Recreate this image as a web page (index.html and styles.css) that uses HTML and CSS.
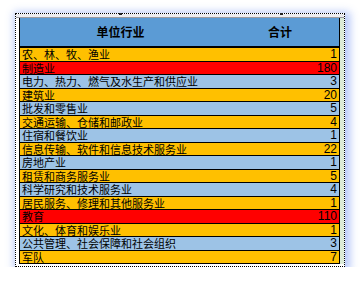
FILE: index.html
```html
<!DOCTYPE html>
<html lang="zh">
<head>
<meta charset="utf-8">
<link rel="stylesheet" href="styles.css">
</head>
<body>
<div class="frame">
  <span class="handle h1"></span>
  <span class="handle h2"></span>
  <div class="strip"></div>
  <div class="body">
    <div class="gap"></div>
    <div class="table">
      <div class="row head"><div class="name">单位行业</div><div class="num">合计</div></div>
      <div class="row o"><div class="name">农、林、牧、渔业</div><div class="num">1</div></div>
      <div class="row r"><div class="name">制造业</div><div class="num">180</div></div>
      <div class="row b"><div class="name">电力、热力、燃气及水生产和供应业</div><div class="num">3</div></div>
      <div class="row o"><div class="name">建筑业</div><div class="num">20</div></div>
      <div class="row b"><div class="name">批发和零售业</div><div class="num">5</div></div>
      <div class="row o"><div class="name">交通运输、仓储和邮政业</div><div class="num">4</div></div>
      <div class="row b"><div class="name">住宿和餐饮业</div><div class="num">1</div></div>
      <div class="row o"><div class="name">信息传输、软件和信息技术服务业</div><div class="num">22</div></div>
      <div class="row b"><div class="name">房地产业</div><div class="num">1</div></div>
      <div class="row o"><div class="name">租赁和商务服务业</div><div class="num">5</div></div>
      <div class="row b"><div class="name">科学研究和技术服务业</div><div class="num">4</div></div>
      <div class="row o"><div class="name">居民服务、修理和其他服务业</div><div class="num">1</div></div>
      <div class="row r"><div class="name">教育</div><div class="num">110</div></div>
      <div class="row o"><div class="name">文化、体育和娱乐业</div><div class="num">1</div></div>
      <div class="row b"><div class="name">公共管理、社会保障和社会组织</div><div class="num">3</div></div>
      <div class="row o"><div class="name">军队</div><div class="num">7</div></div>
    </div>
    <div class="side"></div>
  </div>
</div>
</body>
</html>
```
FILE: styles.css
```css
html, body {
  margin: 0;
  padding: 0;
  background: #ffffff;
}
body {
  padding: 13px 0 0 15px;
}
.frame {
  position: relative;
  width: 328px;
  border: 1px dotted #000;
  background: #fff;
  box-shadow: 2px 2px 8px 3px rgba(90, 130, 240, 0.45);
  padding-bottom: 2px;
}
.handle {
  position: absolute;
  top: -1px;
  width: 3px;
  height: 2px;
  background: #222;
}
.h1 { left: 103px; }
.h2 { left: 264px; }
.strip {
  height: 3px;
  background: #ececf0;
  border-bottom: 1px solid #9a9aa0;
}
.body {
  display: flex;
}
.gap {
  width: 3px;
  flex: none;
}
.side {
  width: 4px;
  flex: none;
  background: #dcebd6;
}
.table {
  width: 319px;
  flex: none;
  border-left: 1px solid #000;
  border-right: 1px solid #000;
  border-bottom: 1px solid #000;
}
.row {
  display: grid;
  grid-template-columns: 201px 1fr;
  height: 12.5px;
  border-bottom: 1px solid #000;
  font-family: "Noto Sans CJK SC", "Liberation Sans", sans-serif;
  font-size: 11px;
  line-height: 12.5px;
  color: #000;
}
.row:last-child {
  border-bottom: none;
}
.name {
  padding-left: 2px;
  white-space: nowrap;
}
.num {
  text-align: right;
  padding-right: 2px;
  font-family: "Liberation Sans", Arial, sans-serif;
  font-size: 12px;
}
.head {
  height: 28px;
  line-height: 28px;
  border-bottom: 2px solid #000;
  background: #5b9bd5;
  font-weight: bold;
  font-size: 12px;
}
.head .name {
  text-align: center;
  padding-left: 0;
}
.head .num {
  text-align: center;
  font-family: "Noto Sans CJK SC", sans-serif;
  padding-right: 0;
}
.o { background: #ffc000; }
.r { background: #ff0000; }
.b { background: #9dc3e6; }
```
